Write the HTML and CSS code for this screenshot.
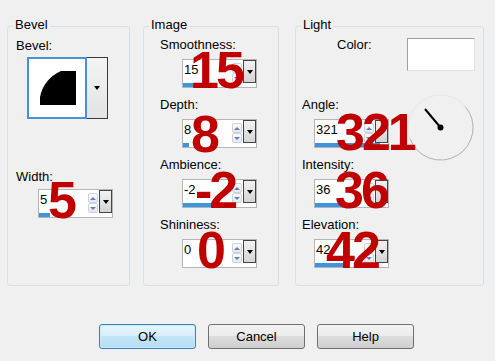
FILE: index.html
```html
<!DOCTYPE html>
<html>
<head>
<meta charset="utf-8">
<link rel="stylesheet" href="styles.css">
</head>
<body>
<div class="dialog">
  <div class="groups">
    <fieldset class="group g-bevel">
      <legend>Bevel</legend>
      <div class="lbl bevel-lbl">Bevel:</div>
      <div class="combo">
        <div class="preview">
          <svg width="56" height="58" viewBox="0 0 56 58"><path d="M11 46 L11 38 A37 37 0 0 1 32 12 L47 12 L47 46 Z" fill="#000"/></svg>
        </div>
        <div class="cbtn"><span class="tri"></span></div>
      </div>
      <div class="lbl width-lbl">Width:</div>
      <div class="spin width-spin">
        <div class="spin-top"><span class="spin-val">5</span><span class="arrows"><span class="sa up"><i></i></span><span class="sa down"><i></i></span></span><span class="drop"><i class="tri"></i></span></div>
        <div class="bar"><div class="fill" style="width:15%"></div></div>
        <span class="num n5">5</span>
      </div>
    </fieldset>

    <fieldset class="group g-image">
      <legend>Image</legend>
      <div class="field first">
        <div class="lbl">Smoothness:</div>
        <div class="spin">
          <div class="spin-top"><span class="spin-val">15</span><span class="arrows"><span class="sa up"><i></i></span><span class="sa down"><i></i></span></span><span class="drop"><i class="tri"></i></span></div>
          <div class="bar"><div class="fill" style="width:15%"></div></div>
          <span class="num n15">15</span>
        </div>
      </div>
      <div class="field">
        <div class="lbl">Depth:</div>
        <div class="spin">
          <div class="spin-top"><span class="spin-val">8</span><span class="arrows"><span class="sa up"><i></i></span><span class="sa down"><i></i></span></span><span class="drop"><i class="tri"></i></span></div>
          <div class="bar"><div class="fill" style="width:8%"></div></div>
          <span class="num n8">8</span>
        </div>
      </div>
      <div class="field">
        <div class="lbl">Ambience:</div>
        <div class="spin">
          <div class="spin-top"><span class="spin-val">-2</span><span class="arrows"><span class="sa up"><i></i></span><span class="sa down"><i></i></span></span><span class="drop"><i class="tri"></i></span></div>
          <div class="bar"><div class="fill" style="width:44%"></div></div>
          <span class="num nm2">-2</span>
        </div>
      </div>
      <div class="field">
        <div class="lbl">Shininess:</div>
        <div class="spin">
          <div class="spin-top"><span class="spin-val">0</span><span class="arrows"><span class="sa up"><i></i></span><span class="sa down"><i></i></span></span><span class="drop"><i class="tri"></i></span></div>
          <div class="bar"><div class="fill" style="width:0%"></div></div>
          <span class="num n0">0</span>
        </div>
      </div>
    </fieldset>

    <fieldset class="group g-light">
      <legend>Light</legend>
      <div class="color-row">
        <span class="lbl color-lbl">Color:</span>
        <span class="swatch"></span>
      </div>
      <div class="angle-row">
        <div class="field">
          <div class="lbl">Angle:</div>
          <div class="spin">
            <div class="spin-top"><span class="spin-val">321</span><span class="arrows"><span class="sa up"><i></i></span><span class="sa down"><i></i></span></span><span class="drop"><i class="tri"></i></span></div>
            <div class="bar"><div class="fill" style="width:89%"></div></div>
            <span class="num n321">321</span>
          </div>
        </div>
        <svg class="dial" width="67" height="67" viewBox="0 0 67 67">
          <circle cx="33.5" cy="33.5" r="32.5" fill="none" stroke="#e6e6e6"/>
          <path d="M58.4 12.6 A32.5 32.5 0 1 1 3 44.6" fill="none" stroke="#b4b4b4"/>
          <line x1="33.5" y1="33.5" x2="18" y2="15" stroke="#000" stroke-width="2"/>
          <circle cx="33.5" cy="33.5" r="3" fill="#000"/>
        </svg>
      </div>
      <div class="field">
        <div class="lbl">Intensity:</div>
        <div class="spin">
          <div class="spin-top"><span class="spin-val">36</span><span class="arrows"><span class="sa up"><i></i></span><span class="sa down"><i></i></span></span><span class="drop"><i class="tri"></i></span></div>
          <div class="bar"><div class="fill" style="width:36%"></div></div>
          <span class="num n36">36</span>
        </div>
      </div>
      <div class="field">
        <div class="lbl">Elevation:</div>
        <div class="spin">
          <div class="spin-top"><span class="spin-val">42</span><span class="arrows"><span class="sa up"><i></i></span><span class="sa down"><i></i></span></span><span class="drop"><i class="tri"></i></span></div>
          <div class="bar"><div class="fill" style="width:47%"></div></div>
          <span class="num n42">42</span>
        </div>
      </div>
    </fieldset>
  </div>

  <div class="btns">
    <button class="btn default">OK</button>
    <button class="btn">Cancel</button>
    <button class="btn">Help</button>
  </div>
</div>
</body>
</html>
```

FILE: styles.css
```css
body {
  margin: 0;
  background: #f0f0f0;
}

.dialog {
  position: relative;
  width: 495px;
  height: 361px;
  background: #f0f0f0;
  font-family: "Liberation Sans", Arial, sans-serif;
  font-size: 13px;
  line-height: 15px;
  color: #000;
  overflow: hidden;
}

.groups {
  display: flex;
  align-items: flex-start;
  padding: 17px 0 0 7px;
}

.group {
  margin: 0;
  padding: 0;
  box-sizing: border-box;
  height: 269px;
  border: 1px solid #d5dfe5;
  border-radius: 3px;
  min-width: 0;
}

.group legend {
  margin-left: 5px;
  padding: 0 2px 3px;
  line-height: 15px;
}

.g-bevel { width: 123px; }
.g-image { width: 136px; margin-left: 13px; }
.g-light { width: 189px; margin-left: 16px; }

.lbl { display: block; white-space: nowrap; }

.bevel-lbl { margin: 3px 0 0 8px; }

.combo {
  display: flex;
  width: 81px;
  height: 62px;
  margin: 4px 0 0 19px;
}

.preview {
  box-sizing: border-box;
  width: 60px;
  height: 62px;
  border: 2px solid #4a90d9;
  background: #fff;
}

.preview svg { display: block; }

.cbtn {
  flex: 1;
  border: 1px solid #3a3a3a;
  border-left: 0;
  background: linear-gradient(#f4f4f4, #e3e3e3);
  display: flex;
  align-items: center;
  justify-content: center;
}

.tri {
  display: block;
  width: 0;
  height: 0;
  border-left: 3px solid transparent;
  border-right: 3px solid transparent;
  border-top: 4px solid #000;
}

.width-lbl { margin: 50px 0 0 8px; }
.width-spin { margin: 5px 0 0 30px; }

/* spin box */
.spin {
  position: relative;
  box-sizing: border-box;
  width: 75px;
  height: 29px;
  border: 1px solid #b5b5b5;
  background: #fff;
  display: flex;
  flex-direction: column;
}

.spin-top {
  display: flex;
  height: 23px;
}

.spin-val {
  flex: 1;
  padding: 2px 0 0 1px;
}

.arrows {
  width: 10px;
  display: flex;
  flex-direction: column;
  padding-top: 3px;
}

.sa {
  box-sizing: border-box;
  width: 10px;
  height: 10px;
  border: 1px solid #cdd2dd;
  border-radius: 2px;
  background: linear-gradient(#fdfdfd, #e4e8f0);
  display: flex;
  align-items: center;
  justify-content: center;
}

.sa i {
  display: block;
  width: 0;
  height: 0;
  border-left: 3px solid transparent;
  border-right: 3px solid transparent;
}

.up i { border-bottom: 3px solid #6a7db4; }
.down i { border-top: 3px solid #6a7db4; }

.drop {
  box-sizing: border-box;
  width: 13px;
  height: 23px;
  margin-left: 1px;
  border: 1px solid #454545;
  background: linear-gradient(#f2f2f2, #d4d4d4);
  display: flex;
  align-items: center;
  justify-content: center;
}

.bar {
  height: 4px;
  margin-top: auto;
}

.fill {
  height: 100%;
  background: #3d95e0;
}

/* fields */
.field { margin-top: 9px; }
.field.first { margin-top: 2px; }
.field .spin { margin-top: 7px; }

.g-image .field { margin-left: 16px; }
.g-image .spin { margin-left: 22px; }

.g-light .field { margin-left: 6px; }
.g-light .spin { margin-left: 12px; }

.color-row {
  display: flex;
  align-items: flex-start;
  padding-top: 2px;
}

.color-lbl { margin-left: 41px; }

.swatch {
  box-sizing: border-box;
  width: 68px;
  height: 33px;
  margin: 1px 8px 0 auto;
  border: 1px solid;
  border-color: #a0a0a0 #e2e2e2 #e2e2e2 #a0a0a0;
  background: #fff;
}

.angle-row {
  display: flex;
  margin-top: 26px;
}

.angle-row .field { margin-top: 0; }

.dial {
  display: block;
  flex: none;
  margin: -3px 9px -13px auto;
}

/* big red overlay numbers */
.num {
  position: absolute;
  z-index: 2;
  top: -16px;
  font: bold 52px/52px "Liberation Sans", Arial, sans-serif;
  letter-spacing: -3px;
  color: #c00000;
  white-space: nowrap;
}

.n5 { left: 9px; }
.n15 { left: 7px; }
.n8 { left: 8px; top: -12px; }
.nm2 { left: 12px; }
.n0 { left: 14px; }
.n321 { left: 21px; top: -14px; }
.n36 { left: 20px; }
.n42 { left: 11px; }

/* buttons */
.btns {
  display: flex;
  gap: 12px;
  margin: 38px 0 0 99px;
}

.btn {
  box-sizing: border-box;
  width: 97px;
  height: 25px;
  padding: 0;
  border: 1px solid #707070;
  border-radius: 3px;
  background: linear-gradient(#f2f2f2 0%, #ebebeb 50%, #dddddd 50%, #cfcfcf 100%);
  font: 13px/15px "Liberation Sans", Arial, sans-serif;
  color: #000;
}

.btn.default {
  border-color: #3c7fb1;
  background: linear-gradient(#e8f5fc 0%, #d6eefb 50%, #c2e5f8 50%, #b4ddf4 100%);
  box-shadow: inset 0 0 0 1px #c9ecfc;
}
```
